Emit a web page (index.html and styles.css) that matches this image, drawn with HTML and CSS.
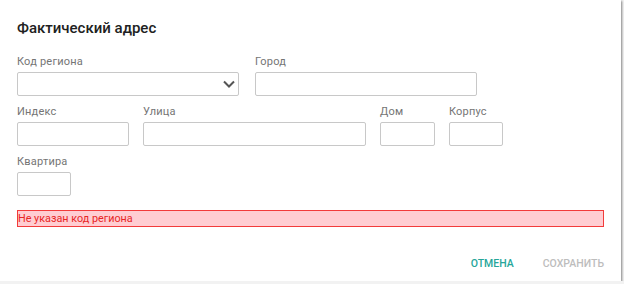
FILE: index.html
```html
<!DOCTYPE html>
<html lang="ru">
<head>
  <meta charset="UTF-8">
  <meta name="viewport" content="width=device-width, initial-scale=1.0">
  <title>Фактический адрес</title>
  <link rel="stylesheet" href="styles.css">
</head>
<body>
  <div class="dialog">
    <h2 class="title">Фактический адрес</h2>

    <div class="row">
      <div class="field w-wide">
        <label>Код региона</label>
        <div class="select">
          <svg width="12" height="8" viewBox="0 0 12 8"><polyline points="1,1.5 6,6.5 11,1.5" fill="none" stroke="#555" stroke-width="2"/></svg>
        </div>
      </div>
      <div class="field w-wide">
        <label>Город</label>
        <div class="input"></div>
      </div>
    </div>

    <div class="row row-tight">
      <div class="field w-index">
        <label>Индекс</label>
        <div class="input"></div>
      </div>
      <div class="field w-street">
        <label>Улица</label>
        <div class="input"></div>
      </div>
      <div class="field w-house">
        <label>Дом</label>
        <div class="input"></div>
      </div>
      <div class="field w-small">
        <label>Корпус</label>
        <div class="input"></div>
      </div>
    </div>

    <div class="row">
      <div class="field w-small">
        <label>Квартира</label>
        <div class="input"></div>
      </div>
    </div>

    <div class="error">Не указан код региона</div>

    <div class="actions">
      <button class="btn btn-primary">Отмена</button>
      <button class="btn btn-disabled">Сохранить</button>
    </div>
  </div>
</body>
</html>
```

FILE: styles.css
```css
body {
  margin: 0;
  background-color: #f2f2f2;
  font-family: Roboto, "Liberation Sans", sans-serif;
}

.dialog {
  width: 621px;
  height: 281px;
  box-sizing: border-box;
  background-color: #fff;
  padding: 19px 17px 0 17px;
  box-shadow: 1px 1px 2px rgba(0, 0, 0, 0.45);
}

.title {
  margin: 0 0 18px 0;
  font-size: 15px;
  line-height: 18px;
  font-weight: 500;
  color: #212121;
}

.row {
  display: flex;
  gap: 16px;
  margin-bottom: 9px;
}

.row-tight {
  gap: 14px;
}

.field {
  display: flex;
  flex-direction: column;
}

.field label {
  font-size: 11px;
  line-height: 14px;
  letter-spacing: 0.2px;
  color: #757575;
  margin-bottom: 3px;
}

.w-wide { width: 222px; }
.w-street { width: 223px; }
.w-index { width: 112px; }
.w-house { width: 55px; }
.w-small { width: 54px; }

.input,
.select {
  height: 24px;
  box-sizing: border-box;
  border: 1px solid #c8c8c8;
  border-radius: 2px;
  background-color: #fff;
}

.select {
  display: flex;
  align-items: center;
  justify-content: flex-end;
  padding-right: 3px;
}

.error {
  margin-top: 14px;
  height: 17px;
  box-sizing: border-box;
  background-color: #ffcdd2;
  border: 1px solid #f23b3b;
  color: #e82525;
  font-size: 10.8px;
  line-height: 15px;
  padding-left: 0;
}

.actions {
  display: flex;
  justify-content: flex-end;
  gap: 29px;
  margin-top: 30px;
}

.btn {
  background: none;
  border: none;
  padding: 0;
  font-family: Roboto, "Liberation Sans", sans-serif;
  font-size: 10.5px;
  line-height: 14px;
  font-weight: 500;
  text-transform: uppercase;
  cursor: pointer;
}

.btn-primary {
  color: #26a69a;
}

.btn-disabled {
  color: #bdbdbd;
}
```
